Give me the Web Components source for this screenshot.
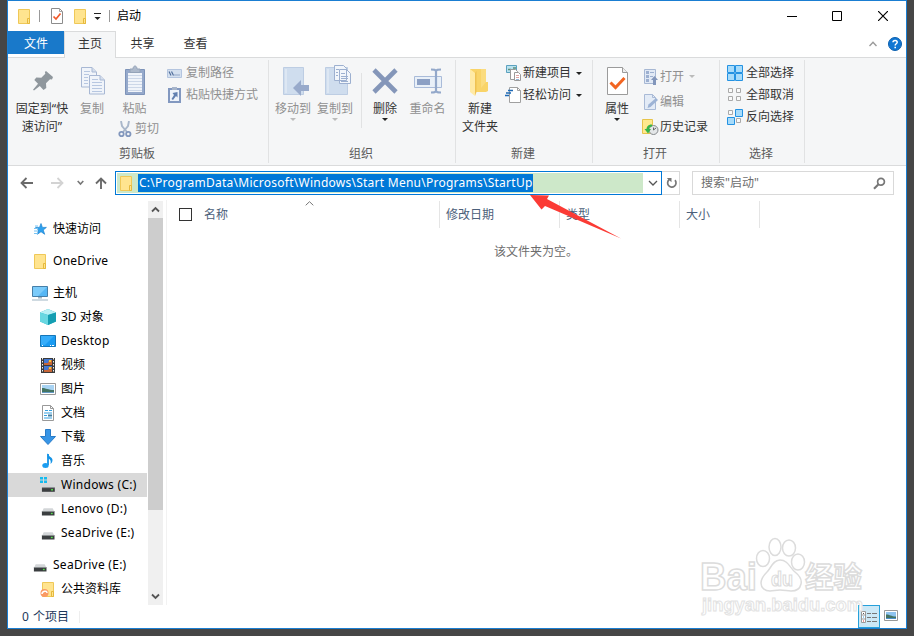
<!DOCTYPE html>
<html lang="zh-CN">
<head>
<meta charset="utf-8">
<title>启动</title>
<style>
    html, body {
        margin: 0;
        height: 100%;
        overflow: hidden;
        background: #464646;
    }

    body {
        font: 12px/18px "Noto Sans", "Noto Sans CJK SC", sans-serif;
        color: #000;
    }
</style>
</head>
<body>
<explorer-window></explorer-window>

<script>
const folder = `
    <path d="M2.500 1.500h11v14h-11z" fill="#ffe48f" stroke="#efc858"/>
    <path d="M11.500 10.500h2v5h-2z" fill="#ffe48f" stroke="#e6b93c"/>`;

const drive = `
    <path d="M3 7h10l2 4H1z" fill="#d3d6d8"/>
    <path d="M1 10.500h14v4.500H1z" fill="#3b3e40"/>
    <path d="M1 10h14v1H1z" fill="#8b8f91"/>
    <path d="M11 12h2v1.500h-2z" fill="#55e04c"/>`;

// each icon: [width, height, svg content]
const icons = {
    folder: [16, 17, folder],
    check: [14, 16, `
        <path d="M1.500.5h8l3 3v12h-11z" fill="#fff" stroke="#8c8c8c"/>
        <path d="M9.500.5v3h3" fill="none" stroke="#a5a5a5"/>
        <path d="M3.500 8.500l2.500 2.500 4.500-5.500" fill="none" stroke="#f1592a" stroke-width="1.700"/>`],
    customize: [7, 8, `<path d="M0 1.500h7" stroke="#222"/><path d="M.5 5h6L3.500 8z" fill="#222"/>`],
    minimize: [10, 10, `<path d="M0 5.500h10" stroke="#000"/>`],
    maximize: [10, 10, `<path d="M.5.5h9v9h-9z" fill="none" stroke="#000"/>`],
    close: [10, 10, `<path d="M0 0l10 10M10 0L0 10" stroke="#000" stroke-width="1.200"/>`],
    collapse: [8, 6, `<path d="M.5 5L4 1.300 7.500 5" fill="none" stroke="#9a9a9a" stroke-width="1.400"/>`],
    help: [14, 14, `
        <circle cx="7" cy="7" r="6.500" fill="#1177d3" stroke="#0b5fae"/>
        <path d="M5 5.300C5 2.900 9.200 2.900 9.200 5.300 9.200 6.800 7.200 6.700 7.200 8.500" fill="none" stroke="#fff" stroke-width="1.500"/>
        <path d="M6.400 9.700H8v1.600H6.400z" fill="#fff"/>`],
    pin: [32, 32, `
        <path d="M20 6l7 6-1 2.500-2-.3-4 4 .3 4.800-2.800 2-3.700-4L8 25.500l-1-.8 5-6-3.700-3.700 2-2.500 5 .2 4-4-.4-1.700z" fill="#8f979d"/>`],
    copy: [32, 32, `
        <g fill="#f0f4fa" stroke="#a8b8d4">
            <path d="M5.500 2.500H16l4.500 4.500v15h-15z"/>
            <path d="M13.500 10.500H24l4.500 4.500v14h-15z"/>
            <path d="M24 10.500V15h4.500M16 2.500V7h4" fill="#d5dfed"/>
        </g>
        <path d="M8 6.500h6M8 9.500h5M8 12.500h4M8 15.500h4M8 18.500h4M16 14.500h6M16 17.500h10M16 20.500h10M16 23.500h10M16 26.500h10" stroke="#b7c7e1"/>`],
    paste: [32, 32, `
        <path d="M6.500 4.500h19v25h-19z" fill="#95a9cb" stroke="#7d93b9"/>
        <path d="M9 8h14v19H9z" fill="#f0f4fa"/>
        <path d="M9 10.500h14M9 13.500h14M9 16.500h14M9 19.500h14M9 22.500h14M9 25.500h14" stroke="#ccd7e8"/>
        <path d="M11 4h3c0-4 4-4 4 0h3v3.500H11z" fill="#adb9cb" stroke="#94a3b8"/>`],
    cut: [14, 17, `
        <path d="M3 0l1 5 5 6M11 0l-1 5-5 6" fill="none" stroke="#a9b7ca" stroke-width="1.900"/>
        <circle cx="3.500" cy="13" r="2.200" fill="none" stroke="#8297bd" stroke-width="1.800"/>
        <circle cx="10.300" cy="13" r="2.200" fill="none" stroke="#8297bd" stroke-width="1.800"/>`],
    path: [16, 16, `
        <path d="M.5 4.500h14v8H.5z" fill="#d4e0ef" stroke="#b4c5df"/>
        <path d="M2 6.500l2 4M4.500 6.500l2 4" stroke="#516e9c" stroke-width="1.200"/>
        <path d="M7.500 10h1M9.500 10h1M11.500 10h1" stroke="#516e9c"/>`],
    shortcut: [16, 18, `
        <path d="M2 3h11v13H2z" fill="#eef3fa" stroke="#8298c0" stroke-width="2"/>
        <path d="M5 1h5v3H5z" fill="#a6b4ca"/>
        <path d="M10.500 6v5.500L9 10l-3 4-1.500-1L7 9 5.500 7z" fill="#617fb0"/>`],
    move: [32, 32, `
        <path d="M6.500 2.500h20v27h-20z" fill="#cfddee" stroke="#bdcde3"/>
        <path d="M8 4h2v24H8z" fill="#dde7f3"/>
        <path d="M24 15v5h8v6h-8v5L16 23z" fill="#98aacb"/>`],
    copyto: [32, 32, `
        <path d="M6.500 2.500h22v27h-22z" fill="#cfddee" stroke="#bdcde3"/>
        <path d="M8 4h2v24H8z" fill="#dde7f3"/>
        <g fill="#f2f6fb" stroke="#9db0d0">
            <path d="M15.500.5h9l3 3v12h-12zM20.500 4.500h7l4 4v10h-11z"/>
        </g>
        <path d="M17 4.500h3M17 7.500h2M17 10.500h2M22 8.500h4M22 11.500h7M22 13.500h7M22 16.500h7" stroke="#9db0d0"/>`],
    delete: [32, 32, `<path d="M5 5l22 22M27 5L5 27" stroke="#8496b9" stroke-width="4.600"/>`],
    rename: [32, 32, `
        <path d="M2.500 11.500h27v11h-27z" fill="#e9f0f8" stroke="#a9bbd9"/>
        <path d="M5 14h13v6H5z" fill="#8ca0c4"/>
        <path d="M24 5v22M19 4.500c3 0 5 0 5 2 0-2 2-2 5-2M19 27.500c3 0 5 0 5-2 0 2 2 2 5 2" fill="none" stroke="#93a8ca" stroke-width="2.200"/>`],
    newfolder: [32, 32, `
        <path d="M6 4h16v13h2v9l-2 1H6z" fill="#f9d469"/>
        <path d="M17 4h5v13l-5 6z" fill="#fbdc7f"/>
        <path d="M6 4l5 4v23l-5-4z" fill="#ffeaa6"/>
        <path d="M11 8l1.500-2v21L11 31z" fill="#efc253"/>`],
    newitem: [18, 18, `
        <path d="M1.500 1.500h10v7h-10z" fill="#b9e2ef" stroke="#5ba1bf"/>
        <path d="M3 5.500h3M8 4h3" stroke="#5c8f7b" stroke-width="1.500"/>
        <path d="M5.500 5.500h5l2 2v8h-7z" fill="#fff" stroke="#9a9a9a"/>
        <path d="M9.500 8.500h4l2 2v6h-6z" fill="#fff" stroke="#9a9a9a"/>
        <path d="M11 11.500h3M11 13.500h3" stroke="#e0a3a3"/><path d="M11 15.500h3" stroke="#94b7da"/>`],
    easy: [18, 18, `
        <path d="M4.500 1.500h8l3 3v12h-11z" fill="#fff" stroke="#a0a0a0"/>
        <path d="M12.500 1.500v3h3" fill="none" stroke="#a0a0a0"/>
        <path d="M3 4.500h5M1 7h5M0 9.500h4" stroke="#1e69b4" stroke-width="1.300"/>`],
    properties: [32, 32, `
        <path d="M6.500 2.500h15l5 5v22h-20z" fill="#fff" stroke="#9b9b9b"/>
        <path d="M21.500 2.500v5h5" fill="#eee" stroke="#9b9b9b"/>
        <path d="M9.500 17.500l5 5 9-9.500" fill="none" stroke="#f26522" stroke-width="3"/>`],
    open: [17, 18, `
        <path d="M2.500 1.500h11v14h-11z" fill="#e1e9f5" stroke="#a6b7d3"/>
        <path d="M4 3h3v3H4zM4 7h3v3H4zM4 11h3v3H4z" fill="#9db0d0"/>
        <path d="M8 4.500h4M8 8.500h3" stroke="#9db0d0"/>
        <path d="M12.500 8l3.500 4h-2v5h-3v-5H9z" fill="#8296bb"/>`],
    edit: [17, 18, `
        <path d="M2.500 1.500h8l3 3v12h-11z" fill="#e3ebf6" stroke="#a9bad6"/>
        <path d="M10.500 1.500v3h3" fill="none" stroke="#a9bad6"/>
        <path d="M5.500 15l1-3.500L14 5l2 2-7.500 7z" fill="#9db3d5"/>`],
    history: [17, 18, `
        <path d="M.5 1.500h10v14H.5z" fill="#ffe88e" stroke="#e7c44b"/>
        <circle cx="11.500" cy="12" r="4.500" fill="#e3e6e8" stroke="#868a8d"/>
        <path d="M11.500 9.500V12l2.500-2" fill="none" stroke="#666"/>
        <path d="M10 6.500C7 6 4.500 8.500 4.500 11H2.500l3.500 4.500 3-4.500H7c0-1.500 1.500-2.500 3-2.500z" fill="#37b449"/>`],
    all: [16, 16, `<path d="M.5.5h7v7h-7zM8.500.5h7v7h-7zM.5 8.500h7v7h-7zM8.500 8.500h7v7h-7z" fill="#a7dbfa" stroke="#2492e2"/>`],
    none: [16, 16, `<path d="M1.500 1.500h4v4h-4zM9.500 1.500h4v4h-4zM1.500 9.500h4v4h-4zM9.500 9.500h4v4h-4z" fill="#fafafa" stroke="#aaa"/>`],
    invert: [16, 16, `
        <path d="M1.500 1.500h4v4h-4zM9.500 9.500h4v4h-4z" fill="#fafafa" stroke="#aaa"/>
        <path d="M8.500.5h7v7h-7zM.5 8.500h7v7h-7z" fill="#a7dbfa" stroke="#2492e2"/>`],
    back: [14, 12, `<path d="M13 6H2M6.500 1L1.500 6l5 5" fill="none" stroke="#6a6a6a" stroke-width="1.800"/>`],
    forward: [14, 12, `<path d="M1 6h11M7.500 1l5 5-5 5" fill="none" stroke="#d3d3d3" stroke-width="1.800"/>`],
    recent: [7, 6, `<path d="M.7 1L3.500 4l2.800-3" fill="none" stroke="#777" stroke-width="1.600"/>`],
    up: [12, 12, `<path d="M6 12V1.500M1 6.500l5-5 5 5" fill="none" stroke="#6a6a6a" stroke-width="1.900"/>`],
    expand: [10, 7, `<path d="M1 1l4 4 4-4" fill="none" stroke="#555" stroke-width="1.300"/>`],
    refresh: [12, 12, `<path d="M3.300 2.500a4.200 4.200 0 1 0 5.700.6" fill="none" stroke="#777" stroke-width="1.700"/><path d="M.8 1h4.700v4.200z" fill="#777"/>`],
    search: [13, 13, `<circle cx="8" cy="4.800" r="3.400" fill="none" stroke="#777" stroke-width="1.700"/><path d="M5.500 7.300L1 11.800" stroke="#777" stroke-width="2.200"/>`],
    star: [16, 16, `
        <path d="M9 2.500l1.400 3.900h4l-3.200 2.600 1.500 4.300-3.700-2.600-3.600 2.600 1.200-4.300-3.100-2.600h4z" fill="#2ea1ee" stroke="#1b82d0" stroke-width=".7"/>
        <path d="M3 5h3M2 7.500h4M2 10h4M2 12.500h4" stroke="#76c3f4"/>`],
    pc: [16, 16, `
        <path d="M.5 1.500h15v10H.5z" fill="#56b7f5" stroke="#467fa8"/>
        <path d="M1 2h14L6 11H1z" fill="#7bcbfa"/>
        <path d="M6 12h4v1.500H6zM0 14.500h16v1H0z" fill="#a0b6c3"/>`],
    cube: [16, 16, `
        <path d="M8 0l8 3.500v9L8 16 0 12.500v-9z" fill="#28b7ca"/>
        <path d="M8 0l8 3.500L8 6 0 3.500z" fill="#b9f0f5"/>
        <path d="M0 3.500L8 6v10l-8-3.500z" fill="#68d7e1"/>
        <path d="M8 6l8-2.500v9L8 16z" fill="#149eb2"/>`],
    desktop: [16, 16, `
        <path d="M.5 2.500h15v11H.5z" fill="#199bf2" stroke="#1576b8"/>
        <path d="M1 3h13L5 12H1z" fill="#36adfa"/>
        <path d="M2 12.500h1M10 12.500h1M12 12.500h2" stroke="#fff"/>`],
    video: [16, 16, `
        <path d="M1 1h14v15H1z" fill="#3b3b3b"/>
        <path d="M2.500 1v15M13.500 1v15" stroke="#eee" stroke-dasharray="1.500 1.500"/>
        <path d="M4 2h8v6H4zM4 9h8v6H4z" fill="#4478d2"/>
        <path d="M4 6h4l1-3h3v5H4zM4 13h4l1-3h3v5H4z" fill="#c76637"/>
        <path d="M9 3h2v2H9zM9 10h2v2H9z" fill="#f3c735"/>`],
    picture: [16, 16, `
        <path d="M.5 2.500h15v11H.5z" fill="#fff" stroke="#999"/>
        <path d="M2 4h12v8H2z" fill="#a8d3f3"/>
        <path d="M2 7c4 0 6 2 12 2v3H2z" fill="#447463"/>
        <path d="M2 11h12v1H2z" fill="#6399c4"/>`],
    doc: [16, 16, `
        <path d="M2.500.5h8l3 3v12h-11z" fill="#fff" stroke="#999"/>
        <path d="M10.500.5v3h3" fill="none" stroke="#999"/>
        <path d="M5 5.500h3M4 8h8M4 10.500h3M4 13h8M9 5.500h3" stroke="#36a0de" stroke-width="1.200"/>
        <path d="M8 9.500h4v2H8z" fill="#437c9e"/>`],
    download: [16, 16, `<path d="M5.500.5h5v7h5L8 15.500.5 7.500h5z" fill="#3795e6" stroke="#287bc8"/>`],
    music: [16, 16, `
        <path d="M8 1v11" stroke="#1493e6" stroke-width="1.800"/>
        <path d="M7.500 0c1 4 5 4 5 7 0 2-1 3-2 4 1-4-1-5-3-6z" fill="#1493e6"/>
        <ellipse cx="5.500" cy="12.500" rx="3.200" ry="2.500" fill="#1b9df0"/>`],
    windrive: [16, 16, `
        <g transform="translate(1 1) scale(.92)">${drive}</g>
        <path d="M0 0h3v2.500H0zM4 0h3v2.500H4zM0 3.500h3V6H0zM4 3.500h3V6H4z" fill="#15bbef"/>`],
    drive: [16, 16, `<g transform="translate(1 1) scale(.9)">${drive}</g>`],
    shared: [16, 17, `${folder}
        <circle cx="4.500" cy="12" r="4" fill="#fa9a64"/>
        <path d="M2 13c0-3 5-4 5-1" fill="none" stroke="#fff" stroke-width="1.500"/>`],
    details: [16, 12, `
        <path d="M.5.5h4v11h-4zM0 4h5M0 8h5" fill="#fff" stroke="#999"/>
        <path d="M2 2h1v1H2z" fill="#555"/><path d="M2 5.500h1v1H2z" fill="#2699e5"/><path d="M2 9.500h1v1H2z" fill="#d12a2a"/>
        <path d="M6 2.500h4M11 2.500h5M6 6.500h4M11 6.500h5M6 10.500h4M11 10.500h5" stroke="#777"/>`],
    icons: [14, 12, `
        <path d="M.5.500h13v10H.5z" fill="#fff" stroke="#999"/>
        <path d="M2 2h10v7H2z" fill="#8fc4f0"/>
        <path d="M2 4.500c4 0 5 2 10 2V9H2z" fill="#447463"/>
        <path d="M2 8h10v1H2z" fill="#4d8fc9"/>`],
};

class UiIcon extends HTMLElement {
    connectedCallback() {
        const [width, height, content] = icons[this.getAttribute('name')];
        this.attachShadow({ mode: 'open' }).innerHTML = `
            <style>
                :host { display: block; flex: none; }
                svg { display: block; }
            </style>
            <svg width="${width}" height="${height}" viewBox="0 0 ${width} ${height}">${content}</svg>
        `;
    }
}

class TitleBar extends HTMLElement {
    constructor() {
        super();
        this.attachShadow({ mode: 'open' }).innerHTML = `
            <style>
                :host { display: flex; align-items: center; height: 30px; }
                .quick { display: flex; align-items: center; padding-left: 8px; flex: 1; }
                .line { width: 1px; height: 12px; background: #999; }
                .controls { display: flex; gap: 36px; padding-right: 18px; }
            </style>
            <div class="quick">
                <ui-icon name="folder"></ui-icon>
                <div class="line" style="margin: 0 10px 0 7px"></div>
                <ui-icon name="check"></ui-icon>
                <ui-icon name="folder" style="margin: 0 6px 0 8px"></ui-icon>
                <ui-icon name="customize"></ui-icon>
                <div class="line" style="margin: 0 7px 0 8px"></div>
                <slot></slot>
            </div>
            <div class="controls">
                <ui-icon name="minimize" style="margin-right: -1px"></ui-icon>
                <ui-icon name="maximize"></ui-icon>
                <ui-icon name="close"></ui-icon>
            </div>
        `;
    }
}

class RibbonTabs extends HTMLElement {
    constructor() {
        super();
        this.attachShadow({ mode: 'open' }).innerHTML = `
            <style>
                :host { display: flex; height: 27px; box-sizing: border-box; border-bottom: 1px solid #dadbdc; color: #333; }
                .tab { height: 24px; line-height: 25px; text-align: center; width: 53px; }
                .file { width: 56px; height: 23px; background: #1979ca; color: #fff; }
                .active { width: 50px; height: 26px; line-height: 24px; margin-bottom: -1px; background: #f5f6f7; border: 1px solid #dadbdc; border-bottom: 0; }
                .right { display: flex; align-items: center; gap: 11px; margin-left: auto; padding-right: 4px; }
            </style>
            <div class="tab file">文件</div>
            <div class="tab active">主页</div>
            <div class="tab">共享</div>
            <div class="tab">查看</div>
            <div class="right">
                <ui-icon name="collapse"></ui-icon>
                <ui-icon name="help"></ui-icon>
            </div>
        `;
    }
}

class RibbonGroup extends HTMLElement {
    connectedCallback() {
        this.attachShadow({ mode: 'open' }).innerHTML = `
            <style>
                :host {
                    display: flex; flex-direction: column; flex: none; box-sizing: border-box;
                    width: ${this.getAttribute('width')}px; height: 103px; margin-top: 2px;
                    border-right: 1px solid #e1e2e3;
                }
                .items { display: flex; flex: 1; }
                .label { height: 18px; padding-right: 2px; text-align: center; color: #5a5a5a; }
            </style>
            <div class="items"><slot></slot></div>
            <div class="label">${this.getAttribute('label')}</div>
        `;
    }
}

// big icon with its label underneath
class LargeButton extends HTMLElement {
    connectedCallback() {
        const disabled = this.hasAttribute('disabled');
        this.attachShadow({ mode: 'open' }).innerHTML = `
            <style>
                :host {
                    display: flex; flex-direction: column; align-items: center; flex: none;
                    width: ${this.getAttribute('width')}px; padding-top: 5px;
                    color: ${disabled ? '#909090' : '#333'};
                    text-align: center; white-space: nowrap;
                }
                .label { margin-top: 3px; }
                .arrow {
                    width: 0; border: 3px solid transparent; border-bottom: 0;
                    border-top-color: ${disabled ? '#bbb' : '#222'};
                }
            </style>
            <ui-icon name="${this.getAttribute('icon')}"></ui-icon>
            <div class="label"><slot></slot></div>
            ${this.hasAttribute('menu') ? '<div class="arrow"></div>' : ''}
        `;
    }
}

class SmallButton extends HTMLElement {
    connectedCallback() {
        const disabled = this.hasAttribute('disabled');
        this.attachShadow({ mode: 'open' }).innerHTML = `
            <style>
                :host {
                    display: flex; align-items: center; height: var(--row, 22px);
                    color: ${disabled ? '#909090' : '#333'}; white-space: nowrap;
                }
                .label { margin-left: var(--gap, 3px); }
                .arrow {
                    margin-left: 5px; border: 3px solid transparent; border-bottom: 0;
                    border-top-color: ${disabled ? '#bbb' : '#222'};
                }
            </style>
            <ui-icon name="${this.getAttribute('icon')}"></ui-icon>
            <div class="label"><slot></slot></div>
            ${this.hasAttribute('menu') ? '<div class="arrow"></div>' : ''}
        `;
    }
}

class ExplorerRibbon extends HTMLElement {
    constructor() {
        super();
        this.attachShadow({ mode: 'open' }).innerHTML = `
            <style>
                :host { display: flex; height: 107px; background: #f5f6f7; border-bottom: 1px solid #dadbdc; }
                .stack { padding-top: 2px; }
                .line { width: 1px; height: 55px; margin: 13px 0 0 5px; background: #e1e2e3; }
            </style>
            <ribbon-group width="261" label="剪贴板">
                <large-button icon="pin" width="68">固定到“快<br>速访问”</large-button>
                <large-button icon="copy" width="32" disabled>复制</large-button>
                <div style="width: 52px">
                    <large-button icon="paste" width="53" disabled>粘贴</large-button>
                    <small-button icon="cut" style="margin-left: 10px" disabled>剪切</small-button>
                </div>
                <div class="stack" style="margin-left: 7px">
                    <small-button icon="path" disabled>复制路径</small-button>
                    <small-button icon="shortcut" disabled>粘贴快捷方式</small-button>
                </div>
            </ribbon-group>
            <ribbon-group width="187" label="组织">
                <large-button icon="move" width="42" style="margin-left: 3px" menu disabled>移动到</large-button>
                <large-button icon="copyto" width="42" menu disabled>复制到</large-button>
                <div class="line"></div>
                <large-button icon="delete" width="46" menu>删除</large-button>
                <large-button icon="rename" width="39" disabled>重命名</large-button>
            </ribbon-group>
            <ribbon-group width="137" label="新建">
                <large-button icon="newfolder" width="48">新建<br>文件夹</large-button>
                <div class="stack" style="margin-left: 1px; --gap: 0px">
                    <small-button icon="newitem" menu>新建项目</small-button>
                    <small-button icon="easy" menu>轻松访问</small-button>
                </div>
            </ribbon-group>
            <ribbon-group width="127" label="打开">
                <large-button icon="properties" width="48" menu>属性</large-button>
                <div class="stack" style="margin-left: 1px; --row: 25px; --gap: 1px; padding-top: 4px">
                    <small-button icon="open" menu disabled>打开</small-button>
                    <small-button icon="edit" disabled>编辑</small-button>
                    <small-button icon="history">历史记录</small-button>
                </div>
            </ribbon-group>
            <ribbon-group width="85" label="选择">
                <div class="stack" style="margin-left: 7px">
                    <small-button icon="all">全部选择</small-button>
                    <small-button icon="none">全部取消</small-button>
                    <small-button icon="invert">反向选择</small-button>
                </div>
            </ribbon-group>
        `;
    }
}

class AddressBar extends HTMLElement {
    constructor() {
        super();
        this.attachShadow({ mode: 'open' }).innerHTML = `
            <style>
                :host { display: flex; align-items: center; height: 34px; box-sizing: border-box; padding: 0 12px; }
                .box {
                    display: flex; align-items: center; box-sizing: border-box; height: 24px;
                    border: 1px solid #d9d9d9;
                }
                .address { width: 547px; margin-left: 8px; border-color: #0078d7; padding-left: 1px; }
                .field {
                    display: flex; align-items: center; box-sizing: border-box; width: 526px; height: 20px;
                    padding-left: 1px; background: #cde8c9;
                }
                .selected {
                    margin-left: 4px; height: 18px; line-height: 18px; padding-left: 1px; background: #0078d7; color: #fff;
                    letter-spacing: 0.25px; white-space: nowrap;
                }
                .refresh { width: 18px; border-left: 0; padding-left: 4px; }
                .search { width: 202px; margin-left: 12px; padding: 0 7px 0 8px; color: #6d6d6d; justify-content: space-between; }
            </style>
            <ui-icon name="back"></ui-icon>
            <ui-icon name="forward" style="margin-left: 16px"></ui-icon>
            <ui-icon name="recent" style="margin-left: 13px"></ui-icon>
            <ui-icon name="up" style="margin-left: 11px"></ui-icon>
            <div class="box address">
                <div class="field">
                    <ui-icon name="folder"></ui-icon>
                    <span class="selected">C:\\ProgramData\\Microsoft\\Windows\\Start Menu\\Programs\\StartUp</span>
                </div>
                <ui-icon name="expand" style="margin-left: 5px"></ui-icon>
            </div>
            <div class="box refresh"><ui-icon name="refresh"></ui-icon></div>
            <div class="box search"><span>搜索"启动"</span><ui-icon name="search"></ui-icon></div>
        `;
    }
}

class NavItem extends HTMLElement {
    connectedCallback() {
        this.attachShadow({ mode: 'open' }).innerHTML = `
            <style>
                :host {
                    display: flex; align-items: center; gap: 5px; height: 24px;
                    padding-left: ${this.hasAttribute('root') ? 24 : 32}px; white-space: nowrap;
                }
                :host([selected]) { background: #d9d9d9; }
                :host([spaced]) { margin-top: 8px; }
                :host(:lang(en)) { letter-spacing: 0.27px; }
            </style>
            <ui-icon name="${this.getAttribute('icon')}"></ui-icon>
            <span><slot></slot></span>
        `;
    }
}

class NavPane extends HTMLElement {
    constructor() {
        super();
        this.attachShadow({ mode: 'open' }).innerHTML = `
            <style>
                :host { display: flex; width: 158px; border-right: 1px solid #f2f2f2; }
                .tree { width: 139px; padding-top: 17px; margin-right: 1px; }
                .scroll { display: flex; flex-direction: column; align-items: center; width: 15px; margin-top: 1px; background: #f0f0f0; }
                .thumb { width: 15px; height: 292px; background: #cdcdcd; }
                .arrow { display: flex; align-items: center; height: 17px; }
                .down { margin-top: auto; }
            </style>
            <div class="tree"><slot></slot></div>
            <div class="scroll">
                <div class="arrow">
                    <svg width="9" height="7"><path d="M1 5.500L4.500 2 8 5.500" fill="none" stroke="#555" stroke-width="1.800"/></svg>
                </div>
                <div class="thumb"></div>
                <div class="arrow down">
                    <svg width="9" height="7"><path d="M1 1.500L4.500 5 8 1.500" fill="none" stroke="#555" stroke-width="1.800"/></svg>
                </div>
            </div>
        `;
    }
}

class FileList extends HTMLElement {
    constructor() {
        super();
        this.attachShadow({ mode: 'open' }).innerHTML = `
            <style>
                :host { display: block; flex: 1; }
                .head { display: flex; height: 27px; margin-top: 1px; line-height: 27px; color: #4c607a; }
                .col { position: relative; box-sizing: border-box; width: 120px; padding-left: 6px; border-right: 1px solid #e5e5e5; }
                .name { display: flex; align-items: center; width: 273px; padding-left: 12px; }
                .check { width: 11px; height: 11px; border: 1px solid #333; margin-right: 12px; }
                .sort { position: absolute; left: 138px; top: 0; }
                .empty { width: 738px; margin-top: 15px; text-align: center; color: #6d6d6d; }
            </style>
            <div class="head">
                <div class="col name">
                    <div class="check"></div>名称
                    <svg class="sort" width="9" height="5"><path d="M.7 4.300l3.800-3.600 3.800 3.600" fill="none" stroke="#777"/></svg>
                </div>
                <div class="col">修改日期</div>
                <div class="col">类型</div>
                <div class="col" style="width: 80px">大小</div>
            </div>
            <div class="empty">该文件夹为空。</div>
        `;
    }
}

class StatusBar extends HTMLElement {
    constructor() {
        super();
        this.attachShadow({ mode: 'open' }).innerHTML = `
            <style>
                :host { display: flex; align-items: center; height: 23px; color: #1e395b; }
                .count { margin-left: 14px; width: 57px; height: 12px; line-height: 12px; word-spacing: 1px; border-right: 1px solid #eee; }
                .details {
                    display: flex; align-items: center; justify-content: center; box-sizing: border-box;
                    width: 22px; height: 23px; margin-left: auto; background: #cce8f6; border: 1px solid #26a0da;
                }
            </style>
            <div class="count"><slot></slot></div>
            <div class="details"><ui-icon name="details"></ui-icon></div>
            <ui-icon name="icons" style="margin: 0 8px 2px 4px"></ui-icon>
        `;
    }
}

class BaiduMark extends HTMLElement {
    constructor() {
        super();
        this.attachShadow({ mode: 'open' }).innerHTML = `
            <style>
                :host { display: block; position: absolute; left: 695px; top: 530px; }
                svg { display: block; }
                text { font-family: "Liberation Sans", "Noto Sans CJK SC", sans-serif; font-weight: bold; }
            </style>
            <svg width="180" height="92" fill="#fff" stroke="#dcdcdc" stroke-width="1.500">
                <text x="5" y="60" font-size="38" textLength="57" lengthAdjust="spacingAndGlyphs">Bai</text>
                <ellipse cx="68" cy="28.500" rx="6.500" ry="8"/>
                <ellipse cx="80" cy="17" rx="6" ry="8.500"/>
                <ellipse cx="94" cy="18" rx="6.500" ry="8"/>
                <ellipse cx="103" cy="32" rx="6.500" ry="8"/>
                <path d="M85 30c8 0 10 8 15 12 5 4 7 8 6 12-1 5-5 7-10 7-4 0-6-1-11-1s-6 1-10 1c-5 0-9-3-9-8 0-4 3-8 6-11 4-4 6-12 13-12z"/>
                <text x="76" y="56" font-size="21" stroke-width="1.200" textLength="22" lengthAdjust="spacingAndGlyphs">du</text>
                <text x="110" y="58" font-size="29" textLength="57" lengthAdjust="spacingAndGlyphs">经验</text>
                <text x="7" y="81" font-size="19" stroke-width="1" stroke="#e2e2e2" textLength="161" lengthAdjust="spacingAndGlyphs">jingyan.baidu.com</text>
            </svg>
        `;
    }
}

class PointerArrow extends HTMLElement {
    constructor() {
        super();
        this.attachShadow({ mode: 'open' }).innerHTML = `
            <style>
                :host { display: block; position: absolute; left: 530px; top: 194px; }
                svg { display: block; }
            </style>
            <svg width="92" height="45"><path d="M0 1l19 .5-2 3.500L91 44.500 15 12l-3.500 3.500z" fill="#fb3b35"/></svg>
        `;
    }
}

class ExplorerWindow extends HTMLElement {
    constructor() {
        super();
        this.attachShadow({ mode: 'open' }).innerHTML = `
            <style>
                :host {
                    display: flex; flex-direction: column; box-sizing: border-box;
                    width: 900px; height: 629px; margin-left: 7px;
                    border: 1px solid #1a7ed2; background: #fff;
                }
                .body { display: flex; flex: 1; min-height: 0; }
            </style>
            <title-bar>启动</title-bar>
            <ribbon-tabs></ribbon-tabs>
            <explorer-ribbon></explorer-ribbon>
            <address-bar></address-bar>
            <div class="body">
                <nav-pane>
                    <nav-item icon="star" root>快速访问</nav-item>
                    <nav-item icon="folder" lang="en" root spaced>OneDrive</nav-item>
                    <nav-item icon="pc" root spaced>主机</nav-item>
                    <nav-item icon="cube">3D 对象</nav-item>
                    <nav-item icon="desktop" lang="en">Desktop</nav-item>
                    <nav-item icon="video">视频</nav-item>
                    <nav-item icon="picture">图片</nav-item>
                    <nav-item icon="doc">文档</nav-item>
                    <nav-item icon="download">下载</nav-item>
                    <nav-item icon="music">音乐</nav-item>
                    <nav-item icon="windrive" lang="en" selected>Windows (C:)</nav-item>
                    <nav-item icon="drive" lang="en">Lenovo (D:)</nav-item>
                    <nav-item icon="drive" lang="en">SeaDrive (E:)</nav-item>
                    <nav-item icon="drive" lang="en" root spaced>SeaDrive (E:)</nav-item>
                    <nav-item icon="shared">公共资料库</nav-item>
                </nav-pane>
                <file-list></file-list>
            </div>
            <baidu-mark></baidu-mark>
            <status-bar>0 个项目</status-bar>
            <pointer-arrow></pointer-arrow>
        `;
    }
}

customElements.define('ui-icon', UiIcon);
customElements.define('title-bar', TitleBar);
customElements.define('ribbon-tabs', RibbonTabs);
customElements.define('ribbon-group', RibbonGroup);
customElements.define('large-button', LargeButton);
customElements.define('small-button', SmallButton);
customElements.define('explorer-ribbon', ExplorerRibbon);
customElements.define('address-bar', AddressBar);
customElements.define('nav-item', NavItem);
customElements.define('nav-pane', NavPane);
customElements.define('file-list', FileList);
customElements.define('status-bar', StatusBar);
customElements.define('baidu-mark', BaiduMark);
customElements.define('pointer-arrow', PointerArrow);
customElements.define('explorer-window', ExplorerWindow);
</script>
</body>
</html>
